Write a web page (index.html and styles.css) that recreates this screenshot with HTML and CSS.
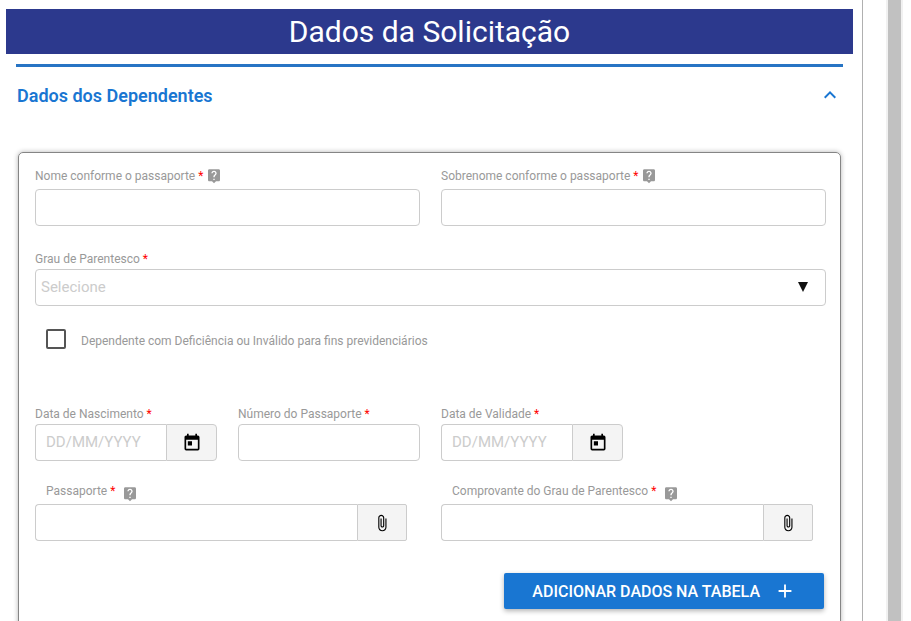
FILE: index.html
```html
<!DOCTYPE html>
<html lang="pt-BR">
<head>
    <meta charset="UTF-8">
    <meta name="viewport" content="width=device-width, initial-scale=1.0">
    <title>Dados da Solicitação</title>
    <link rel="stylesheet" href="styles.css">
</head>
<body>
    <!-- Ícones -->
    <svg class="sprite" aria-hidden="true">
        <symbol id="icon-help" viewBox="0 0 24 24">
            <path d="M19 2H5c-1.11 0-2 .9-2 2v14c0 1.1.89 2 2 2h4l3 3 3-3h4c1.1 0 2-.9 2-2V4c0-1.1-.9-2-2-2zm-6 16h-2v-2h2v2zm2.07-7.75l-.9.92C13.45 11.9 13 12.5 13 14h-2v-.5c0-1.1.45-2.1 1.17-2.83l1.24-1.26c.37-.36.59-.86.59-1.41 0-1.1-.9-2-2-2s-2 .9-2 2H8c0-2.21 1.79-4 4-4s4 1.79 4 4c0 .88-.36 1.68-.93 2.25z"/>
        </symbol>
        <symbol id="icon-calendar" viewBox="0 0 24 24">
            <path d="M7 10h5v5H7M19 19H5V8h14M19 3h-1V1h-2v2H8V1H6v2H5c-1.11 0-2 .9-2 2v14a2 2 0 0 0 2 2h14a2 2 0 0 0 2-2V5a2 2 0 0 0-2-2z"/>
        </symbol>
        <symbol id="icon-clip" viewBox="0 0 24 24">
            <path d="M16.5 6v11.5c0 2.21-1.79 4-4 4s-4-1.79-4-4V5c0-1.38 1.12-2.5 2.5-2.5s2.5 1.12 2.5 2.5v10.5c0 .55-.45 1-1 1s-1-.45-1-1V6H10v9.5c0 1.38 1.12 2.5 2.5 2.5s2.5-1.12 2.5-2.5V5c0-2.21-1.79-4-4-4S7 2.79 7 5v12.5c0 3.04 2.46 5.5 5.5 5.5s5.5-2.46 5.5-5.5V6h-1.5z"/>
        </symbol>
    </svg>

    <main class="page">
        <h1 class="page-title">Dados da Solicitação</h1>

        <section class="section">
            <div class="section-header">
                <h2>Dados dos Dependentes</h2>
                <button type="button" class="toggle" aria-label="Recolher">
                    <svg viewBox="0 0 24 24"><path d="M7.41 15.41L12 10.83l4.59 4.58L18 14l-6-6-6 6z"/></svg>
                </button>
            </div>

            <form class="card">
                <div class="grid">
                    <div class="field half">
                        <div class="label-row with-help">
                            <label for="nome">Nome conforme o passaporte <span class="required">*</span></label>
                            <svg class="help"><use href="#icon-help"/></svg>
                        </div>
                        <input type="text" id="nome" class="control">
                    </div>
                    <div class="field half">
                        <div class="label-row with-help">
                            <label for="sobrenome">Sobrenome conforme o passaporte <span class="required">*</span></label>
                            <svg class="help"><use href="#icon-help"/></svg>
                        </div>
                        <input type="text" id="sobrenome" class="control">
                    </div>
                </div>

                <div class="grid relation">
                    <div class="field full">
                        <div class="label-row">
                            <label for="parentesco">Grau de Parentesco <span class="required">*</span></label>
                        </div>
                        <div class="select">
                            <select id="parentesco" class="control">
                                <option>Selecione</option>
                            </select>
                            <svg class="arrow" viewBox="0 0 10 10"><path d="M0 0h10L5 10z"/></svg>
                        </div>
                    </div>
                </div>

                <div class="check">
                    <input type="checkbox" id="dependente">
                    <label for="dependente">Dependente com Deficiência ou Inválido para fins previdenciários</label>
                </div>

                <div class="grid">
                    <div class="field">
                        <div class="label-row">
                            <label for="nascimento">Data de Nascimento <span class="required">*</span></label>
                        </div>
                        <div class="group">
                            <input type="text" id="nascimento" class="control" placeholder="DD/MM/YYYY">
                            <button type="button" class="addon" aria-label="Abrir calendário">
                                <svg class="calendar"><use href="#icon-calendar"/></svg>
                            </button>
                        </div>
                    </div>
                    <div class="field">
                        <div class="label-row">
                            <label for="numero">Número do Passaporte <span class="required">*</span></label>
                        </div>
                        <input type="text" id="numero" class="control">
                    </div>
                    <div class="field">
                        <div class="label-row">
                            <label for="validade">Data de Validade <span class="required">*</span></label>
                        </div>
                        <div class="group">
                            <input type="text" id="validade" class="control" placeholder="DD/MM/YYYY">
                            <button type="button" class="addon" aria-label="Abrir calendário">
                                <svg class="calendar"><use href="#icon-calendar"/></svg>
                            </button>
                        </div>
                    </div>
                </div>

                <div class="grid files">
                    <div class="field half file">
                        <div class="label-row with-help">
                            <label for="passaporte">Passaporte <span class="required">*</span></label>
                            <svg class="help"><use href="#icon-help"/></svg>
                        </div>
                        <div class="group">
                            <input type="text" id="passaporte" class="control">
                            <button type="button" class="addon" aria-label="Anexar arquivo">
                                <svg class="clip"><use href="#icon-clip"/></svg>
                            </button>
                        </div>
                    </div>
                    <div class="field half file">
                        <div class="label-row with-help">
                            <label for="comprovante">Comprovante do Grau de Parentesco <span class="required">*</span></label>
                            <svg class="help"><use href="#icon-help"/></svg>
                        </div>
                        <div class="group">
                            <input type="text" id="comprovante" class="control">
                            <button type="button" class="addon" aria-label="Anexar arquivo">
                                <svg class="clip"><use href="#icon-clip"/></svg>
                            </button>
                        </div>
                    </div>
                </div>

                <div class="actions">
                    <button type="button" class="add-button">
                        ADICIONAR DADOS NA TABELA
                        <svg viewBox="0 0 24 24"><path d="M19 13h-6v6h-2v-6H5v-2h6V5h2v6h6v2z"/></svg>
                    </button>
                </div>
            </form>
        </section>
    </main>
    <div class="scrollbar"><div class="thumb"></div></div>
</body>
</html>
```

FILE: styles.css
```css
* {
    box-sizing: border-box;
}

body {
    margin: 0;
    height: 100vh;
    overflow: hidden;
    display: flex;
    background: #fff;
    font-family: Roboto, sans-serif;
    padding-right: 8px;
}

.sprite {
    display: none;
}

svg {
    fill: currentColor;
    flex-shrink: 0;
}

.page {
    flex: 1;
    padding: 9px 9px 0 6px;
    border-right: 1px solid #b0b0b0;
}

.page-title {
    margin: 0 0 10px;
    background: #2c398d;
    color: #fff;
    font-size: 30px;
    font-weight: 400;
    line-height: 45px;
    text-align: center;
}

.section {
    margin: 0 10px;
    border-top: 3px solid #2774c4;
}

.section-header {
    display: flex;
    justify-content: space-between;
    align-items: center;
    height: 56px;
    padding: 0 1px;
    color: #1976d2;
}

.section-header h2 {
    margin: 0;
    font-size: 18px;
    font-weight: 600;
}

.toggle {
    border: none;
    background: none;
    padding: 0;
    width: 24px;
    height: 24px;
    color: inherit;
    cursor: pointer;
}

.card {
    margin: 29px 2px 0;
    padding: 15px 14px 24px 16px;
    border: 1px solid #858585;
    border-radius: 5px;
    box-shadow: 0 0 5px rgba(0, 0, 0, 0.3);
}

.grid {
    display: grid;
    grid-template-columns: repeat(4, 1fr);
    gap: 21px;
}

.half {
    grid-column: span 2;
}

.full {
    grid-column: span 4;
}

.field {
    min-width: 0;
}

.label-row {
    display: flex;
    align-items: flex-start;
    gap: 3px;
    height: 18px;
    font-size: 12px;
    line-height: 16px;
    color: #999;
}

.label-row.with-help {
    height: 21px;
}

.required {
    color: #f00;
}

.help {
    width: 16px;
    height: 16px;
}

.control {
    display: block;
    width: 100%;
    height: 37px;
    padding: 0 10px 2px;
    border: 1px solid #ccc;
    border-radius: 4px;
    background: #fff;
    font-family: inherit;
    font-size: 15px;
    color: #333;
}

.control::placeholder {
    color: #ccc;
}

.relation {
    margin-top: 25px;
}

.select {
    position: relative;
}

.select .control {
    appearance: none;
    padding: 0 5px 2px;
    color: #ccc;
}

.arrow {
    position: absolute;
    right: 18px;
    top: 13px;
    width: 10px;
    height: 10px;
    color: #111;
    pointer-events: none;
}

.check {
    display: flex;
    align-items: center;
    gap: 15px;
    margin: 23px 0 57px 11px;
    font-size: 12px;
    color: #999;
}

.check input {
    appearance: none;
    width: 20px;
    height: 20px;
    margin: 0;
    border: 2px solid #555;
    border-radius: 2px;
}

.check label {
    padding-top: 4px;
}

.group {
    display: flex;
}

.group .control {
    flex: 1;
    min-width: 0;
    border-right: none;
    border-radius: 4px 0 0 4px;
}

.addon {
    display: flex;
    justify-content: center;
    align-items: center;
    width: 51px;
    padding: 0;
    border: 1px solid #ccc;
    border-radius: 0 4px 4px 0;
    background: #f4f4f4;
    color: #000;
    cursor: pointer;
}

.calendar {
    width: 20px;
    height: 20px;
}

.clip {
    width: 18px;
    height: 18px;
}

.files {
    margin-top: 22px;
}

.file .group {
    margin-right: 13px;
}

.file .addon {
    width: 50px;
    border-radius: 0 2px 2px 0;
}

.file .label-row {
    padding-left: 11px;
    gap: 7px;
}

.file .help {
    margin-top: 3px;
}

.actions {
    display: flex;
    justify-content: flex-end;
    margin: 32px 2px 0 0;
}

.add-button {
    display: flex;
    align-items: center;
    gap: 14px;
    height: 36px;
    padding: 0 28px;
    border: none;
    border-radius: 2px;
    background: #1976d2;
    color: #fff;
    font-family: inherit;
    font-size: 16px;
    font-weight: 500;
    box-shadow: 0 2px 5px rgba(0, 0, 0, 0.3);
    cursor: pointer;
}

.add-button svg {
    width: 22px;
    height: 22px;
}

.scrollbar {
    width: 17px;
    margin-left: 23px;
    padding: 0 2px;
    background: #f1f1f1;
}

.thumb {
    height: 100%;
    background: #c1c1c1;
}
```
